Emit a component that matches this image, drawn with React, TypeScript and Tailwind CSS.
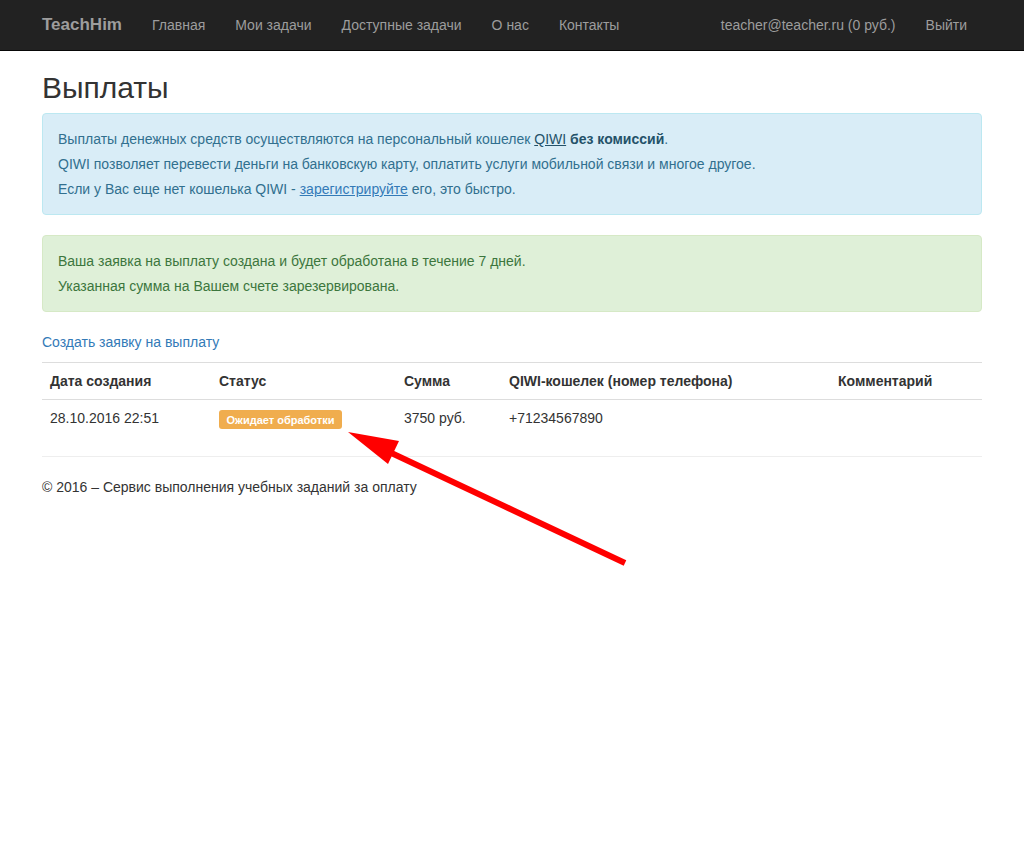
const navLinks = ["Главная", "Мои задачи", "Доступные задачи", "О нас", "Контакты"];

const columns = [
  { title: "Дата создания", width: "w-[169px]" },
  { title: "Статус", width: "w-[185px]" },
  { title: "Сумма", width: "w-[105px]" },
  { title: "QIWI-кошелек (номер телефона)", width: "w-[329px]" },
  { title: "Комментарий", width: "" },
];

function Navbar() {
  return (
    <nav className="h-[51px] border-b border-[#080808] bg-[#222222]">
      <div className="mx-auto flex h-[50px] w-[970px] items-center px-[15px]">
        <a className="pr-[15px] text-[17px] font-bold text-[#9d9d9d]">TeachHim</a>
        {navLinks.map((l) => (
          <a key={l} className="px-[15px] text-[14px] text-[#9d9d9d]">
            {l}
          </a>
        ))}
        <div className="ml-auto flex">
          <a className="px-[15px] text-[14px] text-[#9d9d9d]">teacher@teacher.ru (0 руб.)</a>
          <a className="px-[15px] text-[14px] text-[#9d9d9d]">Выйти</a>
        </div>
      </div>
    </nav>
  );
}

function PaymentArrow() {
  return (
    <svg className="pointer-events-none absolute left-0 top-0" width="1024" height="848">
      <line x1="625" y1="563" x2="385" y2="450" stroke="#ff0000" strokeWidth="6" />
      <polygon points="348,432 399,441 388,464" fill="#ff0000" />
    </svg>
  );
}

export default function App() {
  return (
    <div className="relative min-h-[848px] bg-white font-['Liberation_Sans',Arial,sans-serif] text-[14px] leading-[20px] text-[#333333]">
      <Navbar />
      <div className="mx-auto w-[970px] px-[15px]">
        <h2 className="mb-[9px] mt-[20px] text-[30px] leading-[33px]">Выплаты</h2>

        <div className="mb-[20px] flex flex-col gap-[5px] rounded-[4px] border border-[#bce8f1] bg-[#d9edf7] p-[15px] text-[#31708f]">
          <p>
            Выплаты денежных средств осуществляются на персональный кошелек{" "}
            <a className="text-[#245269] underline">QIWI</a> <b className="text-[#245269]">без комиссий</b>.
          </p>
          <p>QIWI позволяет перевести деньги на банковскую карту, оплатить услуги мобильной связи и многое другое.</p>
          <p>
            Если у Вас еще нет кошелька QIWI - <a className="text-[#337ab7] underline">зарегистрируйте</a> его, это быстро.
          </p>
        </div>

        <div className="mb-[20px] flex flex-col gap-[5px] rounded-[4px] border border-[#d6e9c6] bg-[#dff0d8] p-[15px] text-[#3c763d]">
          <p>Ваша заявка на выплату создана и будет обработана в течение 7 дней.</p>
          <p>Указанная сумма на Вашем счете зарезервирована.</p>
        </div>

        <p className="mb-[10px]">
          <a className="text-[#337ab7]">Создать заявку на выплату</a>
        </p>

        <div className="border-t border-[#dddddd]">
          <div className="flex border-b border-[#dddddd] font-bold">
            {columns.map((c) => (
              <div key={c.title} className={`${c.width} p-[8px]`}>
                {c.title}
              </div>
            ))}
          </div>
          <div className="flex h-[37px]">
            <div className="w-[169px] p-[8px]">28.10.2016 22:51</div>
            <div className="w-[185px] px-[8px] pt-[10px]">
              <span className="flex h-[19px] w-[123px] items-center justify-center rounded-[3px] bg-[#f0ad4e] text-[11px] font-bold text-white">
                Ожидает обработки
              </span>
            </div>
            <div className="w-[105px] p-[8px]">3750 руб.</div>
            <div className="w-[329px] p-[8px]">+71234567890</div>
            <div className="p-[8px]"></div>
          </div>
        </div>

        <hr className="mb-[20px] mt-[19px] border-[#eeeeee]" />
        <footer>
          <p>© 2016 – Сервис выполнения учебных заданий за оплату</p>
        </footer>
      </div>
      <PaymentArrow />
    </div>
  );
}
